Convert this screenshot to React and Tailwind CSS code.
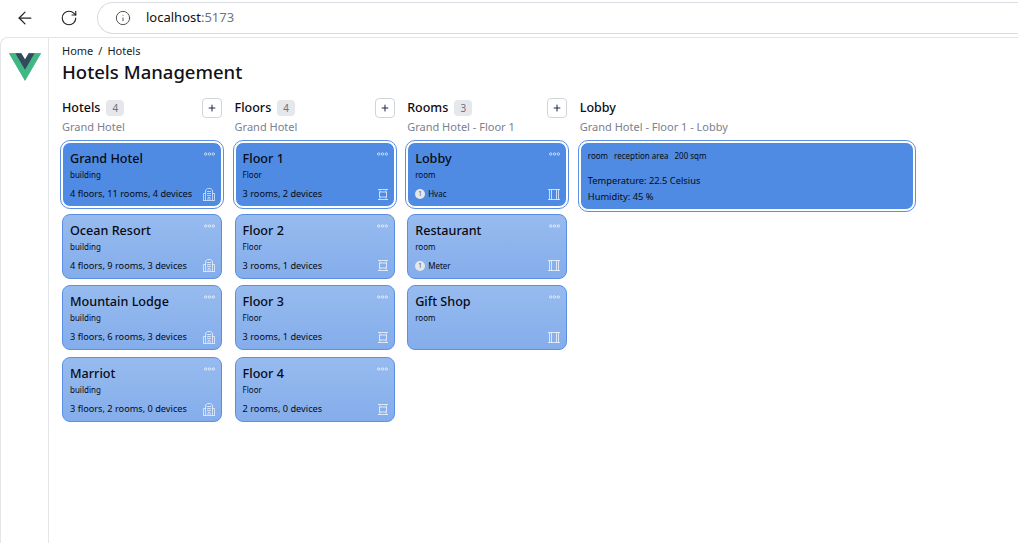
import { ArrowLeft, RotateCw, Info, Plus } from "lucide-react";

const hotels = [
  { name: "Grand Hotel", stats: "4 floors, 11 rooms, 4 devices", selected: true },
  { name: "Ocean Resort", stats: "4 floors, 9 rooms, 3 devices" },
  { name: "Mountain Lodge", stats: "3 floors, 6 rooms, 3 devices" },
  { name: "Marriot", stats: "3 floors, 2 rooms, 0 devices" },
];

const floors = [
  { name: "Floor 1", stats: "3 rooms, 2 devices", selected: true },
  { name: "Floor 2", stats: "3 rooms, 1 devices" },
  { name: "Floor 3", stats: "3 rooms, 1 devices" },
  { name: "Floor 4", stats: "2 rooms, 0 devices" },
];

const rooms = [
  { name: "Lobby", device: "Hvac", selected: true },
  { name: "Restaurant", device: "Meter" },
  { name: "Gift Shop" },
];

function BuildingIcon() {
  return (
    <svg width="12" height="13" viewBox="0 0 12 13" fill="none" stroke="currentColor" strokeWidth="0.9">
      <path d="M0.5 12.5V5.5H2.5M11.5 12.5V5.5H9.5M2.5 12.5V2L4.5 0.5H7.5L9.5 2V12.5M0 12.5H12" />
      <path d="M4 3.5H8M4 5.5H8M4 7.5H8M5 12.5V9.5H7V12.5" />
    </svg>
  );
}

function FloorIcon() {
  return (
    <svg width="10" height="11" viewBox="0 0 10 11" fill="none" stroke="currentColor" strokeWidth="1">
      <path d="M0 0.5H10M0 10.5H10M1 3H9M1 8H9M1.5 3V8M8.5 3V8" />
      <path d="M1.5 0.5L2.5 3M8.5 0.5L7.5 3M1.5 10.5L2.5 8M8.5 10.5L7.5 8" strokeWidth="0.7" />
    </svg>
  );
}

function RoomIcon() {
  return (
    <svg width="12" height="11" viewBox="0 0 12 11" fill="none" stroke="currentColor" strokeWidth="1">
      <path d="M0 0.5H12M0 10.5H12M1.5 0.5V10.5M3.5 0.5V10.5M8.5 0.5V10.5M10.5 0.5V10.5" />
    </svg>
  );
}

function DotsIcon() {
  return (
    <svg width="11" height="4" viewBox="0 0 11 4" fill="none" stroke="currentColor" strokeWidth="0.8">
      <circle cx="1.7" cy="2" r="1.2" />
      <circle cx="5.5" cy="2" r="1.2" />
      <circle cx="9.3" cy="2" r="1.2" />
    </svg>
  );
}

function ColumnHeader({ title, count, sub }) {
  return (
    <div className="h-[45px]">
      <div className="flex h-[22px] items-center justify-between">
        <div className="flex items-center gap-[6px]">
          <span className="text-[12.5px] font-medium text-[#0a0d14]">{title}</span>
          {count && (
            <span className="flex h-4 w-[18px] items-center justify-center rounded bg-[#e5e7eb] text-[10px] text-[#6b7280]">
              {count}
            </span>
          )}
        </div>
        {count && (
          <button className="flex h-5 w-5 items-center justify-center rounded border border-[#d1d5db] bg-white text-[#1e2a4a]">
            <Plus size={10} strokeWidth={2.5} />
          </button>
        )}
      </div>
      <div className="text-[11px] text-[#7b8190]">{sub}</div>
    </div>
  );
}

function Card({ item, kind, icon }) {
  const tone = item.selected
    ? "bg-[#4f8ae3] outline outline-1 outline-offset-1 outline-[#5b8fe3] border-white"
    : "bg-gradient-to-b from-[#97bbef] to-[#84adeb] border-[#5b8fe3]";
  return (
    <div className={`relative flex h-[65px] flex-col rounded-lg border pl-[7px] pr-[6px] pt-[7px] ${tone}`}>
      <span className="absolute right-[6px] top-[9px] text-white/80">
        <DotsIcon />
      </span>
      <div className="text-[12.6px] font-medium leading-[18px] text-[#060a14]">{item.name}</div>
      <div className="mt-[1px] text-[8px] leading-[12px] text-[#060a14]">{kind}</div>
      <div className="mt-[6px] flex h-[14px] items-center justify-between text-[#060a14]">
        {item.stats && <span className="text-[9.2px]">{item.stats}</span>}
        {item.device && (
          <span className="flex items-center gap-[3px] text-[8px]">
            <span className="flex h-[10px] w-[10px] items-center justify-center rounded-full bg-[#e5e7eb] text-[6.5px] text-[#4b5563]">1</span>
            {item.device}
          </span>
        )}
        <span className="ml-auto text-white/70">{icon}</span>
      </div>
    </div>
  );
}

export default function App() {
  return (
    <div className="flex h-[543px] w-[1018px] flex-col overflow-hidden bg-white font-['Noto_Sans',sans-serif]">
      {/* browser bar */}
      <div className="flex h-[37px] shrink-0 items-center bg-white pb-[2px] pl-[15px]">
        <ArrowLeft size={20} strokeWidth={1.5} className="text-[#222]" />
        <RotateCw size={18} strokeWidth={1.5} className="ml-[25px] text-[#222]" />
        <div className="ml-[19px] flex h-[32px] w-[921px] items-center rounded-l-full border border-r-0 border-[#d9dce1] pl-[17px]">
          <Info size={16} strokeWidth={1.5} className="text-[#555]" />
          <span className="ml-[15px] text-[13px]">
            <span className="text-[#111]">localhost</span>
            <span className="text-[#6f7480]">:5173</span>
          </span>
        </div>
      </div>

      <div className="flex min-h-0 flex-1 rounded-tl-lg border-l border-t border-[#e3e5e8]">
        {/* sidebar */}
        <div className="flex w-[48px] shrink-0 justify-center border-r border-[#e3e5e8] pt-[15px]">
          <svg width="32" height="28" viewBox="0 0 256 221">
            <path d="M204.8 0H256L128 220.8 0 0h97.92L128 51.2 157.44 0h47.36Z" fill="#41b883" />
            <path d="M0 0l128 220.8L256 0h-51.2L128 132.48 50.56 0H0Z" fill="#41b883" />
            <path d="M50.56 0L128 133.12 204.8 0h-47.36L128 51.2 97.92 0H50.56Z" fill="#35495e" />
          </svg>
        </div>

        {/* main */}
        <div className="flex-1 pl-[13px] pt-[5px]">
          <div className="text-[11px] leading-[16px] text-[#1a1d24]">
            Home<span className="mx-[5px]">/</span>Hotels
          </div>
          <h1 className="text-[18.5px] font-medium leading-[26px] text-[#0f1218]">Hotels Management</h1>

          <div className="mt-[12px] flex items-start gap-[12.6px]">
            <div className="w-[160px]">
              <ColumnHeader title="Hotels" count="4" sub="Grand Hotel" />
              <div className="flex flex-col gap-[6.7px]">
                {hotels.map((h) => (
                  <Card key={h.name} item={h} kind="building" icon={<BuildingIcon />} />
                ))}
              </div>
            </div>
            <div className="w-[160px]">
              <ColumnHeader title="Floors" count="4" sub="Grand Hotel" />
              <div className="flex flex-col gap-[6.7px]">
                {floors.map((f) => (
                  <Card key={f.name} item={f} kind="Floor" icon={<FloorIcon />} />
                ))}
              </div>
            </div>
            <div className="w-[160px]">
              <ColumnHeader title="Rooms" count="3" sub="Grand Hotel - Floor 1" />
              <div className="flex flex-col gap-[6.7px]">
                {rooms.map((r) => (
                  <Card key={r.name} item={r} kind="room" icon={<RoomIcon />} />
                ))}
              </div>
            </div>
            <div className="w-[334px]">
              <ColumnHeader title="Lobby" sub="Grand Hotel - Floor 1 - Lobby" />
              <div className="h-[68px] rounded-lg border border-white bg-[#4f8ae3] pl-[7px] pr-2 pt-[7px] text-[#060a14] outline outline-1 outline-offset-1 outline-[#5b8fe3]">
                <div className="flex gap-[6px] text-[8px] leading-[12px]">
                  <span>room</span>
                  <span>reception area</span>
                  <span>200 sqm</span>
                </div>
                <div className="mt-[11px] text-[9.3px] leading-[16px]">Temperature: 22.5 Celsius</div>
                <div className="text-[9.3px] leading-[16px]">Humidity: 45 %</div>
              </div>
            </div>
          </div>
        </div>
      </div>
    </div>
  );
}
